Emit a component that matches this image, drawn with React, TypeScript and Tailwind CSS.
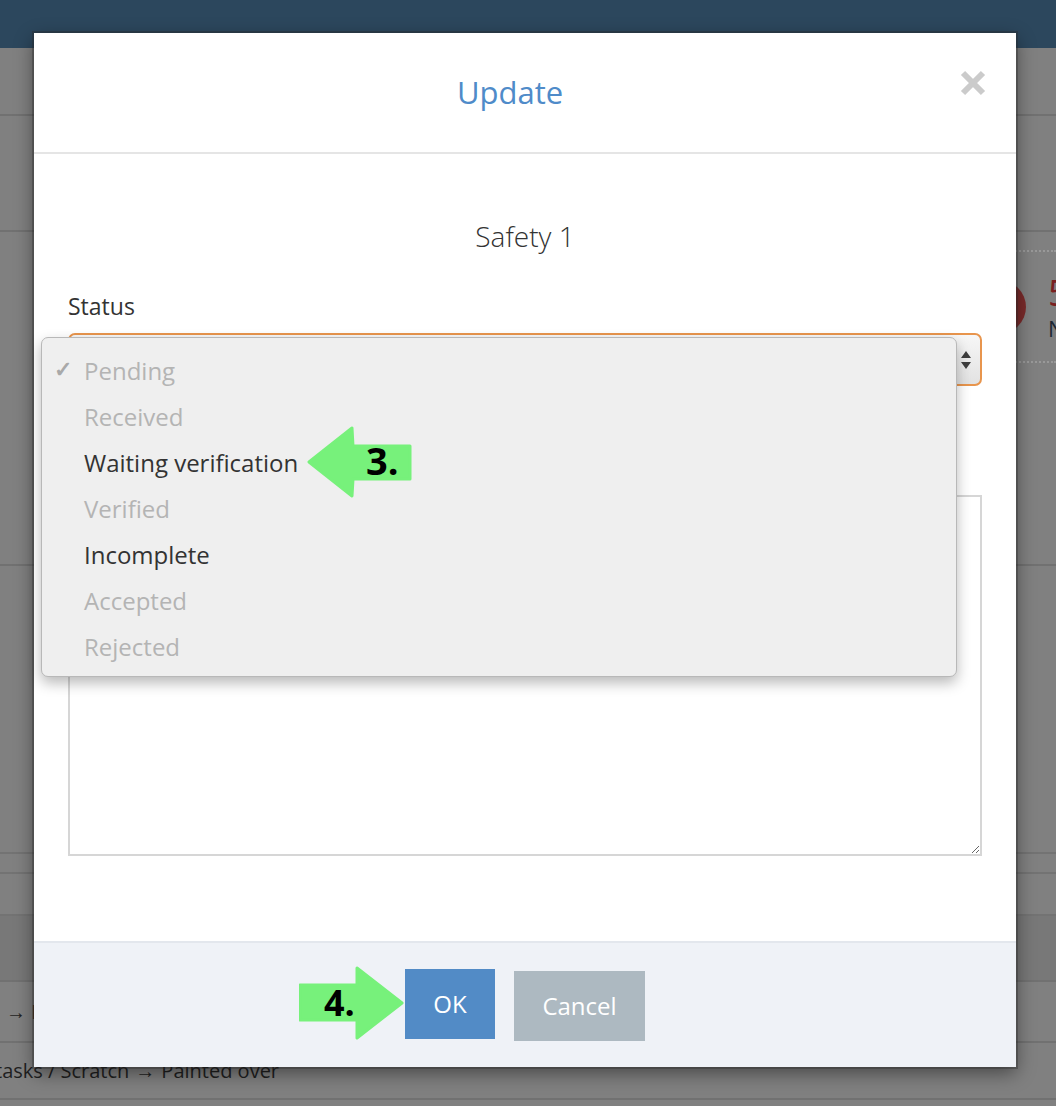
import React from 'react';

const STATUSES = [
  { label: 'Pending', enabled: false, checked: true },
  { label: 'Received', enabled: false },
  { label: 'Waiting verification', enabled: true },
  { label: 'Verified', enabled: false },
  { label: 'Incomplete', enabled: true },
  { label: 'Accepted', enabled: false },
  { label: 'Rejected', enabled: false },
];

const GREEN = '#77f17b';

// Callout arrows used to mark the steps
function ArrowLeft({ step }: { step: string }) {
  return (
    <div className="relative w-[105px] h-[72px]">
      <svg width="105" height="72" viewBox="0 0 105 72" className="absolute inset-0">
        <polygon
          points="2,36 45,2 46,20 103,20 103,53 46,53 45,70"
          fill={GREEN}
          stroke={GREEN}
          strokeWidth={3}
          strokeLinejoin="round"
        />
      </svg>
      <span className="absolute left-[59px] top-[10px] text-[38px] leading-[48px] font-bold text-black">
        {step}
      </span>
    </div>
  );
}

function ArrowRight({ step }: { step: string }) {
  return (
    <div className="relative w-[105px] h-[74px]">
      <svg width="105" height="74" viewBox="0 0 105 74" className="absolute inset-0">
        <polygon
          points="1,19 58,19 58,2 103,37 58,72 58,54 1,54"
          fill={GREEN}
          stroke={GREEN}
          strokeWidth={3}
          strokeLinejoin="round"
        />
      </svg>
      <span className="absolute left-[25px] top-[13px] text-[36px] leading-[48px] font-bold text-black">
        {step}
      </span>
    </div>
  );
}

function StatusDropdown() {
  return (
    <div className="w-[916px] h-[340px] bg-[#efefef] border border-[#b8b8b8] rounded-[7px] shadow-[0_6px_14px_rgba(0,0,0,0.28)] pt-[10px] pb-[8px]">
      {STATUSES.map((s) => (
        <div key={s.label} className="h-[46px] flex items-center text-[24px]">
          <span className="w-[42px] pl-[12px] text-[22px] font-bold text-[#a9a9a9] mt-[-6px]">{s.checked ? '✓' : ''}</span>
          <span className={s.enabled ? 'text-[#333333]' : 'text-[#b4b4b4]'}>{s.label}</span>
        </div>
      ))}
    </div>
  );
}

function UpdateModal() {
  return (
    <div className="absolute left-[34px] top-[33px] w-[982px] h-[1034px] bg-white flex flex-col shadow-[0_0_0_2px_rgba(40,40,40,0.35),0_6px_18px_rgba(0,0,0,0.45)]">
      <div className="h-[121px] shrink-0 flex border-b-2 border-[#e5e5e5] px-[28px]">
        <h4 className="flex-1 text-center text-[31px] leading-[40px] text-[#4f8bc9] self-center mt-[-2px]">Update</h4>
        <button className="w-[30px] h-[26px] mt-[37px] flex items-center justify-center">
          <svg width="26" height="26" viewBox="0 0 26 26">
            <path d="M3 3 L23 23 M23 3 L3 23" stroke="#cbcbcb" strokeWidth={6} />
          </svg>
        </button>
      </div>

      <div className="flex-1 flex flex-col px-[34px]">
        <div className="mt-[62px] text-center text-[28px] leading-[40px] font-light text-[#333333]">Safety 1</div>
        <label className="mt-[36px] text-[23px] leading-[28px] text-[#333333]">Status</label>
        <div className="mt-[13px] h-[53px] border-2 border-[#e8954d] rounded-[7px] bg-gradient-to-b from-[#f7f7f7] to-[#e2e2e2] flex justify-end items-center pr-[8px]">
          <svg width="12" height="20" viewBox="0 0 12 20">
            <path d="M6 1 L11 8 L1 8 Z M1 12 L11 12 L6 19 Z" fill="#3e3e3e" />
          </svg>
        </div>
        <textarea
          readOnly
          className="mt-[109px] h-[361px] w-full border-2 border-[#d6d6d6] bg-white resize outline-none"
        />
      </div>

      <div className="h-[126px] shrink-0 bg-[#eff2f7] border-t-2 border-[#e3e7ed] flex justify-center items-start gap-[19px] pt-[26px]">
        <button className="w-[90px] h-[70px] bg-[#528bc6] text-white text-[24px]">OK</button>
        <button className="w-[131px] h-[70px] mt-[2px] bg-[#adb9c1] text-white text-[24px]">Cancel</button>
      </div>

      <div className="absolute left-[7px] top-[304px]">
        <StatusDropdown />
      </div>
      <div className="absolute left-[273px] top-[393px]">
        <ArrowLeft step="3." />
      </div>
      <div className="absolute left-[265px] top-[933px]">
        <ArrowRight step="4." />
      </div>
    </div>
  );
}

export default function App() {
  return (
    <div className="relative w-[1056px] h-[1106px] overflow-hidden bg-[#808080] font-['Open_Sans',sans-serif]">
      {/* page behind the backdrop */}
      <div className="flex flex-col">
        <div className="h-[48px] bg-[#2c475d]" />
        <div className="h-[68px] border-b-2 border-[#717171]" />
        <div className="h-[116px] border-b-2 border-[#717171]" />
        <div className="h-[334px] border-b-2 border-[#717171] pt-[18px]">
          <div className="ml-[972px] flex items-center border-y-2 border-dotted border-[#999999] h-[113px]">
            <div className="w-[54px] h-[54px] rounded-full bg-[#7b2b2b] shrink-0" />
            <div className="ml-[22px] flex flex-col shrink-0">
              <span className="text-[36px] leading-[42px] text-[#7a2020]">5</span>
              <span className="text-[22px] leading-[28px] text-[#1f2833]">N</span>
            </div>
          </div>
        </div>
        <div className="h-[288px] border-b-2 border-[#737373]" />
        <div className="h-[20px] border-b-2 border-[#737373]" />
        <div className="h-[42px] border-b-2 border-[#737373]" />
        <div className="h-[66px] bg-[#787878] border-b-2 border-[#717171]" />
        <div className="h-[61px] border-b-2 border-[#717171] flex items-center pl-[6px] text-[20px] text-[#1f1f1f]">
          <span className="font-bold">→</span>&nbsp;N
        </div>
        <div className="h-[57px] border-b-2 border-[#717171] flex items-center ml-[-5px] text-[20px] text-[#1f1f1f]">
          tasks / Scratch <span className="font-bold mx-[6px]">→</span> Painted over
        </div>
      </div>

      <UpdateModal />
    </div>
  );
}
